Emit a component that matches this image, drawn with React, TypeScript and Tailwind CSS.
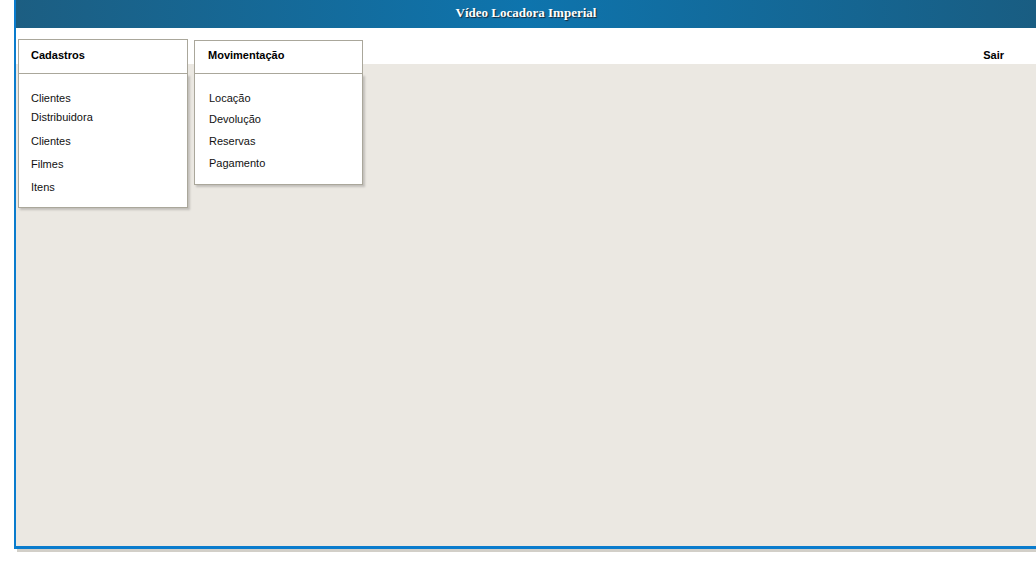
import React from 'react';

const font = "font-['Liberation_Sans',Arial,sans-serif]";

const MenuItem: React.FC<{ label: string; className?: string }> = ({ label, className = '' }) => (
  <a href="#" className={`block leading-[14px] text-[11px] text-[#111] ${className}`}>
    {label}
  </a>
);

const App: React.FC = () => {
  return (
    <div className={`w-[1036px] h-[563px] overflow-hidden bg-white ${font}`}>
      <div className="ml-[14px] w-[1022px] h-[549px] flex flex-col border-l-2 border-b-[3px] border-l-[#0a7ccd] border-b-[#0a7ccd] shadow-[3px_3px_0_#d2cfc8]">
        {/* Title bar */}
        <div className="h-[28px] flex items-center justify-center bg-[linear-gradient(90deg,#1c5e82_0%,#0e74ad_50%,#195d82_100%)]">
          <span className="font-['Liberation_Serif','Times_New_Roman',serif] font-bold text-[13px] leading-[16px] text-white [text-shadow:1px_1px_1px_#1a2a3a] pb-[2px]">
            Vídeo Locadora Imperial
          </span>
        </div>

        {/* Work area */}
        <div className="flex-1 flex items-start bg-[linear-gradient(#ffffff_0,#ffffff_36px,#ebe8e2_36px)] pl-[2px] pt-[11px]">
          {/* Cadastros */}
          <div className="w-[170px] flex flex-col">
            <div className="h-[35px] bg-white border border-[#aaa79b] pl-[12px] pt-[8px] text-[11px] leading-[14px] font-bold text-black">
              Cadastros
            </div>
            <div className="bg-white border border-t-0 border-[#aaa79b] shadow-[2px_2px_2px_rgba(0,0,0,0.18)] pl-[12px] pt-[17px] pb-[13px]">
              <MenuItem label="Clientes" className="mb-[5px]" />
              <MenuItem label="Distribuidora" className="mb-[10px]" />
              <MenuItem label="Clientes" className="mb-[9px]" />
              <MenuItem label="Filmes" className="mb-[9px]" />
              <MenuItem label="Itens" />
            </div>
          </div>

          {/* Movimentação */}
          <div className="w-[169px] ml-[6px] mt-[1px] flex flex-col">
            <div className="h-[34px] bg-white border border-[#aaa79b] pl-[13px] pt-[7px] text-[11px] leading-[14px] font-bold text-black">
              Movimentação
            </div>
            <div className="bg-white border border-t-0 border-[#aaa79b] shadow-[2px_2px_2px_rgba(0,0,0,0.18)] pl-[14px] pt-[17px] pb-[14px]">
              <MenuItem label="Locação" className="mb-[7px]" />
              <MenuItem label="Devolução" className="mb-[8px]" />
              <MenuItem label="Reservas" className="mb-[8px]" />
              <MenuItem label="Pagamento" />
            </div>
          </div>

          <div className="flex-1" />
          <a href="#" className="mt-[9px] mr-[32px] text-[11px] leading-[14px] font-bold text-black">
            Sair
          </a>
        </div>
      </div>
    </div>
  );
};

export default App;
